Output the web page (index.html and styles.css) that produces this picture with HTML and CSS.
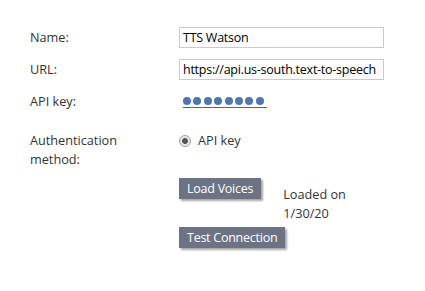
FILE: index.html
```html
<!DOCTYPE html>
<html>
<head>
<meta charset="utf-8">
<link rel="stylesheet" href="styles.css">
</head>
<body>
<div class="form">
  <div class="label row1">Name:</div>
  <div class="value row1"><div class="input">TTS Watson</div></div>

  <div class="label row2">URL:</div>
  <div class="value row2"><div class="input">https://api.us-south.text-to-speech</div></div>

  <div class="label row3">API key:</div>
  <div class="value row3">
    <a class="secret"><span></span><span></span><span></span><span></span><span></span><span></span><span></span><span></span></a>
  </div>

  <div class="label row4">Authentication<br>method:</div>
  <div class="value row4">
    <label class="radio"><span class="dot"></span>API key</label>
  </div>

  <div class="label row5"></div>
  <div class="value row5">
    <div class="loadrow">
      <button class="btn">Load Voices</button>
      <div class="loaded">Loaded on<br>1/30/20</div>
    </div>
    <button class="btn test">Test Connection</button>
  </div>
</div>
</body>
</html>
```
FILE: styles.css
```css
html, body {
  margin: 0;
  padding: 0;
  background: #fff;
}
body {
  font-family: "Open Sans", "Segoe UI", sans-serif;
  font-size: 12.7px;
  color: #333;
  width: 425px;
  height: 291px;
  overflow: hidden;
}
.form {
  display: grid;
  grid-template-columns: 149px 205px;
  padding: 27px 0 0 30px;
  row-gap: 0;
}
.label {
  line-height: 19px;
}
.row1, .row2 {
  height: 21px;
  display: flex;
  align-items: center;
}
.row2 { margin-top: 11px; }
.row3 {
  margin-top: 11px;
  height: 20px;
  display: flex;
  align-items: center;
}
.row4 { margin-top: 20px; }
.row5 { margin-top: 0; }
.input {
  box-sizing: border-box;
  width: 205px;
  height: 21px;
  border: 1px solid #c9c8d3;
  padding: 0 3px;
  line-height: 19px;
  color: #000;
  font-size: 12.5px;
  letter-spacing: -0.25px;
  white-space: nowrap;
  overflow: hidden;
}
.secret {
  display: flex;
  gap: 2.4px;
  margin-left: 4px;
  padding-bottom: 2px;
  border-bottom: 1px solid #3a6aae;
  width: 84px;
  box-sizing: border-box;
  position: relative;
  top: 1px;
}
.secret span {
  width: 8px;
  height: 8px;
  border-radius: 50%;
  background: #5076b0;
}
.radio {
  display: flex;
  align-items: center;
  gap: 7px;
  line-height: 19px;
  color: #333;
}
.dot {
  box-sizing: border-box;
  width: 12px;
  height: 12px;
  border-radius: 50%;
  border: 1px solid #a0a0a0;
  background: radial-gradient(circle, #555 0 2.6px, #e8e8e8 3.2px);
}
.loadrow {
  display: flex;
  align-items: flex-start;
  gap: 22px;
  margin-top: 9px;
}
.btn {
  font-family: "Open Sans", "Segoe UI", sans-serif;
  font-size: 12.5px;
  letter-spacing: -0.25px;
  color: #fff;
  background: #6c7384;
  border: none;
  height: 21px;
  padding: 0 8px;
  line-height: 21px;
  box-shadow: 2px 2px 2px rgba(0, 0, 0, 0.35);
  cursor: pointer;
}
.loaded {
  line-height: 19px;
  color: #333;
  margin-top: 7px;
}
.test {
  display: block;
  margin-top: 4px;
}
```
